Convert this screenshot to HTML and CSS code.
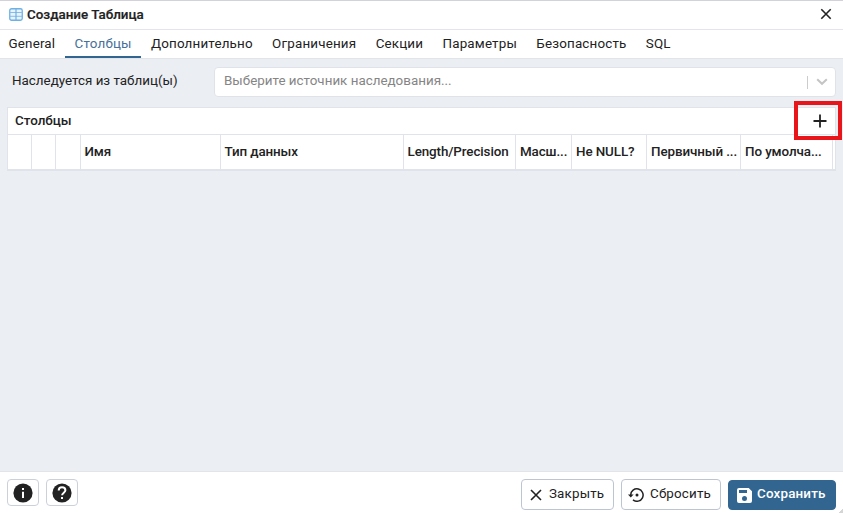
FILE: index.html
```html
<!DOCTYPE html>
<html lang="ru">
<head>
<meta charset="utf-8">
<title>Создание Таблица</title>
<link rel="stylesheet" href="styles.css">
</head>
<body>
<div class="dialog">
  <header class="titlebar">
    <svg class="table-icon" width="14" height="13" viewBox="0 0 14 13"><rect x=".75" y=".75" width="12.5" height="11.5" rx="1.8" fill="#e9f3fb" stroke="#6db1e4" stroke-width="1.3"/><path d="M1 4.5h12M1 8.3h12" stroke="#85bee8" stroke-width="1"/><path d="M7 1v11" stroke="#6db1e4" stroke-width="1.2"/></svg>
    <h1 class="title">Создание Таблица</h1>
    <button class="close" aria-label="Закрыть окно"><svg width="12" height="12" viewBox="0 0 12 12"><path d="M1.3 1.3l9.4 9.4M10.7 1.3l-9.4 9.4" stroke="#222" stroke-width="1.6"/></svg></button>
  </header>
  <nav class="tabs">
    <a class="tab">General</a>
    <a class="tab active">Столбцы</a>
    <a class="tab">Дополнительно</a>
    <a class="tab">Ограничения</a>
    <a class="tab">Секции</a>
    <a class="tab">Параметры</a>
    <a class="tab">Безопасность</a>
    <a class="tab">SQL</a>
  </nav>
  <main class="content">
    <div class="field">
      <label class="label">Наследуется из таблиц(ы)</label>
      <div class="select">
        <span class="placeholder">Выберите источник наследования...</span>
        <span class="divider"></span>
        <svg class="chevron" width="12" height="8" viewBox="0 0 12 8"><path d="M1.2 1.3L6 5.8l4.8-4.5" fill="none" stroke="#c4c4c4" stroke-width="2"/></svg>
      </div>
    </div>
    <section class="grid">
      <div class="grid-head">
        <span class="grid-title">Столбцы</span>
        <button class="add" aria-label="Добавить"><svg width="14" height="14" viewBox="0 0 14 14"><path d="M7 .5v13M.5 7h13" stroke="#222" stroke-width="1.8"/></svg></button>
      </div>
      <div class="columns">
        <div class="col"></div>
        <div class="col"></div>
        <div class="col"></div>
        <div class="col"><span>Имя</span></div>
        <div class="col"><span>Тип данных</span></div>
        <div class="col"><span>Length/Precision</span></div>
        <div class="col"><span>Масш...</span></div>
        <div class="col"><span>Не NULL?</span></div>
        <div class="col"><span>Первичный ...</span></div>
        <div class="col"><span>По умолча...</span></div>
      </div>
    </section>
  </main>
  <footer class="footer">
    <button class="btn icon-btn" aria-label="Информация"><svg width="20" height="20" viewBox="0 0 20 20"><circle cx="10" cy="10" r="9.6" fill="#222"/><path d="M9 5h2v2H9zM9 8.8h2V15H9z" fill="#fff"/></svg></button>
    <button class="btn icon-btn" aria-label="Справка"><svg width="20" height="20" viewBox="0 0 20 20"><circle cx="10" cy="10" r="9.6" fill="#222"/><path d="M6.7 7.6C6.7 5.300 8.100 4.200 10 4.200s3.400 1.200 3.400 3.100c0 2.300-3.300 2.500-3.300 5" fill="none" stroke="#fff" stroke-width="2"/><path d="M9 14h2v2H9z" fill="#fff"/></svg></button>
    <span class="spacer"></span>
    <button class="btn close-btn"><svg width="12" height="12" viewBox="0 0 12 12"><path d="M1 1l10 10M11 1L1 11" stroke="#222" stroke-width="1.6"/></svg><span>Закрыть</span></button>
    <button class="btn reset-btn"><svg width="16" height="14" viewBox="0 0 16 14"><path d="M2.700 7A6.200 6.200 0 1 1 5 11.900" fill="none" stroke="#222" stroke-width="1.500"/><path d="M0 6.500h5.600L2.800 9.400z" fill="#222"/><circle cx="9" cy="7" r="1.500" fill="#222"/></svg><span>Сбросить</span></button>
    <button class="btn save-btn"><svg width="15" height="15" viewBox="0 0 15 15"><path fill-rule="evenodd" d="M2 0h9.700L15 3.300V13a2 2 0 0 1-2 2H2a2 2 0 0 1-2-2V2a2 2 0 0 1 2-2zM2 2v3h8V2zM7.500 8a2.500 2.500 0 1 0 0 5 2.500 2.500 0 0 0 0-5z" fill="#fff"/></svg><span>Сохранить</span></button>
    <i class="resize"></i>
  </footer>
  <div class="highlight"></div>
</div>
</body>
</html>
```
FILE: styles.css
```css
* { box-sizing: border-box; }
body {
  margin: 0;
  font-family: Roboto, "Liberation Sans", sans-serif;
  font-size: 13.4px;
  letter-spacing: 0.17px;
  color: #222;
}
button { font: inherit; letter-spacing: inherit; color: inherit; padding: 0; margin: 0; }
svg { display: block; flex: none; }
.dialog {
  position: relative;
  width: 843px;
  height: 513px;
  display: flex;
  flex-direction: column;
  overflow: hidden;
  background: #fff;
  border-top: 1px solid #d2d3da;
}
.titlebar {
  height: 29px;
  flex: none;
  display: flex;
  align-items: center;
  padding: 0 11px 2px 9px;
  border-bottom: 1px solid #e3e5ea;
}
.title { margin: 0 auto 0 4px; font-size: 13.4px; font-weight: 500; letter-spacing: 0; -webkit-text-stroke: 0.2px #222; }
.close { border: 0; background: none; }
.tabs {
  height: 29px;
  flex: none;
  display: flex;
  border-bottom: 1px solid #e1e4e9;
}
.tab { height: 28px; padding: 0 9.7px; line-height: 27px; white-space: nowrap; }
.tab:first-child { padding-left: 8.5px; }
.tab.active { color: #47709b; border-bottom: 2px solid #326690; }
.content { flex: 1; background: #ebeef3; padding: 8px 7px 0; }
.field { display: flex; height: 30px; }
.label { width: 207px; padding-left: 5px; line-height: 28px; letter-spacing: 0; }
.select {
  flex: 1;
  display: flex;
  align-items: center;
  padding: 0 7px 0 9px;
  background: #fff;
  border: 1px solid #dfe3e9;
  border-radius: 4px;
}
.placeholder { margin-right: auto; color: #858585; letter-spacing: 0; line-height: 26px; align-self: flex-start; }
.divider { width: 1px; height: 13px; background: #ccc; margin-right: 8px; }
.grid { margin-top: 10px; background: #fff; border: 1px solid #e0e3e9; border-bottom-width: 2px; }
.grid-head {
  height: 27px;
  display: flex;
  align-items: center;
  padding: 0 8px 0 7px;
  border-bottom: 1px solid #e0e3e9;
}
.grid-title { margin-right: auto; margin-top: -1px; font-weight: 500; letter-spacing: 0; }
.add { border: 0; background: none; }
.columns {
  display: grid;
  grid-template-columns: 24px 24px 24.5px 140px 183px 112.5px 56px 75px 94px 91.5px;
  height: 34px;
}
.col {
  border-right: 1px solid #e0e3e9;
  padding-left: 4px;
  line-height: 33px;
  font-weight: 500;
  letter-spacing: -0.1px;
  white-space: nowrap;
}
.footer {
  position: relative;
  height: 42px;
  flex: none;
  display: flex;
  align-items: flex-start;
  padding: 7px 7px 0;
  border-top: 1px solid #e1e4e9;
}
.btn {
  height: 31px;
  display: flex;
  align-items: center;
  background: #fff;
  border: 1px solid #bec5d2;
  border-radius: 4px;
}
.btn span { margin-top: -3px; }
.icon-btn { width: 32px; height: 27px; justify-content: center; margin-right: 7px; border-color: #cbd1da; }
.spacer { flex: 1; }
.close-btn { width: 93px; padding-left: 8px; gap: 7px; margin-right: 7px; }
.reset-btn { width: 100px; padding-left: 6px; gap: 6px; margin-right: 7px; }
.save-btn { width: 108px; height: 30px; margin-top: 1px; padding-left: 8px; gap: 5px; background: #326690; border-color: #326690; color: #fff; font-weight: 500; }
.resize {
  position: absolute;
  right: 0;
  bottom: 0;
  width: 5px;
  height: 5px;
  background: linear-gradient(135deg, transparent 50%, #d5d5d5 50%);
}
.highlight {
  position: absolute;
  left: 794px;
  top: 100px;
  width: 48px;
  height: 39px;
  border: 4px solid #e8151b;
}
```
